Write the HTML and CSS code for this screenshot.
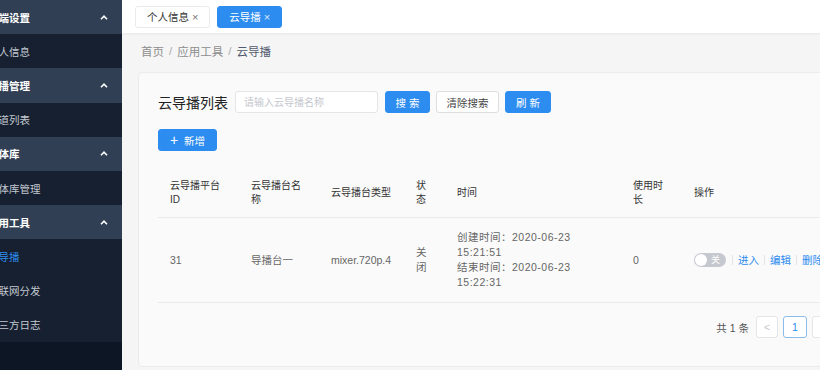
FILE: index.html
```html
<!DOCTYPE html>
<html lang="zh-CN">
<head>
<meta charset="utf-8">
<title>云导播</title>
<link rel="stylesheet" href="styles.css">
</head>
<body>
<div class="app">
  <aside class="sidebar">
    <div class="menu-title"><span class="label">终端设置</span><svg class="arrow" viewBox="0 0 8 5" width="8" height="5"><path d="M1 4.2 L4 1.2 L7 4.2" fill="none" stroke="#fff" stroke-width="1.6"/></svg></div>
    <div class="menu-item"><span class="label">个人信息</span></div>
    <div class="menu-title"><span class="label">直播管理</span><svg class="arrow" viewBox="0 0 8 5" width="8" height="5"><path d="M1 4.2 L4 1.2 L7 4.2" fill="none" stroke="#fff" stroke-width="1.6"/></svg></div>
    <div class="menu-item"><span class="label">频道列表</span></div>
    <div class="menu-title"><span class="label">媒体库</span><svg class="arrow" viewBox="0 0 8 5" width="8" height="5"><path d="M1 4.2 L4 1.2 L7 4.2" fill="none" stroke="#fff" stroke-width="1.6"/></svg></div>
    <div class="menu-item"><span class="label">媒体库管理</span></div>
    <div class="menu-title"><span class="label">应用工具</span><svg class="arrow" viewBox="0 0 8 5" width="8" height="5"><path d="M1 4.2 L4 1.2 L7 4.2" fill="none" stroke="#fff" stroke-width="1.6"/></svg></div>
    <div class="menu-item active"><span class="label">云导播</span></div>
    <div class="menu-item"><span class="label">互联网分发</span></div>
    <div class="menu-item"><span class="label">第三方日志</span></div>
  </aside>
  <main class="main">
    <div class="tabs">
      <span class="tab">个人信息 <span class="close">×</span></span>
      <span class="tab tab-active">云导播 <span class="close">×</span></span>
    </div>
    <div class="crumb">
      <span>首页</span><span class="sep">/</span><span>应用工具</span><span class="sep">/</span><span class="crumb-last">云导播</span>
    </div>
    <section class="card">
      <div class="toolbar">
        <h2 class="card-title">云导播列表</h2>
        <input class="search" type="text" placeholder="请输入云导播名称">
        <button class="btn btn-primary btn-search">搜 索</button>
        <button class="btn btn-default btn-clear">清除搜索</button>
        <button class="btn btn-primary btn-refresh">刷 新</button>
      </div>
      <div class="toolbar-2">
        <button class="btn btn-primary btn-add"><span class="plus">+</span>新增</button>
      </div>
      <table class="table">
        <colgroup>
          <col class="c1"><col class="c2"><col class="c3"><col class="c4"><col class="c5"><col class="c6"><col class="c7">
        </colgroup>
        <thead>
          <tr>
            <th>云导播平台ID</th>
            <th>云导播台名称</th>
            <th>云导播台类型</th>
            <th>状态</th>
            <th>时间</th>
            <th>使用时长</th>
            <th>操作</th>
          </tr>
        </thead>
        <tbody>
          <tr>
            <td>31</td>
            <td>导播台一</td>
            <td>mixer.720p.4</td>
            <td>关闭</td>
            <td class="time">创建时间：2020-06-23 15:21:51<br>结束时间：2020-06-23 15:22:31</td>
            <td>0</td>
            <td>
              <div class="ops">
                <span class="switch"><span class="knob"></span><span class="switch-text">关</span></span>
                <span class="divider"></span>
                <a class="link">进入</a>
                <span class="divider"></span>
                <a class="link">编辑</a>
                <span class="divider"></span>
                <a class="link">删除</a>
              </div>
            </td>
          </tr>
        </tbody>
      </table>
      <div class="pager">
        <span class="total">共 1 条</span>
        <span class="page page-prev">&lt;</span>
        <span class="page page-current">1</span>
        <span class="page page-next">&gt;</span>
      </div>
    </section>
  </main>
</div>
</body>
</html>
```
FILE: styles.css
```css
* { box-sizing: border-box; }
html, body {
  margin: 0;
  padding: 0;
  width: 820px;
  height: 370px;
  overflow: hidden;
  font-family: "Liberation Sans", "Noto Sans CJK SC", sans-serif;
  background: #f5f5f5;
}
.app {
  display: flex;
  width: 820px;
  height: 370px;
  overflow: hidden;
}
.sidebar {
  width: 122px;
  flex-shrink: 0;
  background: #0d1625;
  overflow: hidden;
  display: flex;
  flex-direction: column;
}
.menu-title, .menu-item {
  height: 34.2px;
  display: flex;
  align-items: center;
  font-size: 10.5px;
  white-space: nowrap;
  flex-shrink: 0;
}
.menu-title {
  background: #313f54;
  color: #fff;
  font-weight: bold;
  justify-content: space-between;
  padding-right: 14px;
}
.menu-item {
  background: #162030;
  color: #c3c8d0;
}
.menu-item.active { color: #2d8cf0; }
.label { margin-left: -12px; }
.arrow { display: block; }

.main {
  flex: 1;
  min-width: 0;
  background: #f5f5f5;
  overflow: hidden;
}
.tabs {
  height: 33px;
  background: #fff;
  box-shadow: 0 1px 3px rgba(0,0,0,0.06);
  display: flex;
  align-items: center;
  gap: 7px;
  padding-left: 13px;
  position: relative;
}
.tab {
  height: 22px;
  display: inline-flex;
  align-items: center;
  padding: 0 11px;
  font-size: 10.5px;
  color: #333;
  background: #fff;
  border: 1px solid #e8eaec;
  border-radius: 3px;
  white-space: pre;
}
.tab .close { font-size: 11px; color: #777; }
.tab-active {
  background: #2d8cf0;
  border-color: #2d8cf0;
  color: #fff;
}
.tab-active .close { color: #dbeafd; }

.crumb {
  height: 39px;
  display: flex;
  align-items: center;
  padding-left: 19px;
  padding-bottom: 4px;
  font-size: 11.5px;
  color: #8d8d8d;
}
.crumb .sep { margin: 0 5px; color: #aaa; }
.crumb-last { color: #515a6e; }

.card {
  margin-left: 16px;
  width: 716px;
  height: 295px;
  background: #fafafa;
  border: 1px solid #ececec;
  border-radius: 4px;
  padding: 18px 19px;
}
.toolbar {
  display: flex;
  align-items: center;
  height: 22px;
}
.card-title {
  margin: 0 7px 0 0;
  font-size: 14px;
  font-weight: normal;
  color: #222;
  white-space: nowrap;
}
.search {
  width: 143px;
  height: 22px;
  border: 1px solid #e3e5e8;
  border-radius: 3px;
  background: #fff;
  padding: 0 8px;
  font-size: 10px;
  font-family: inherit;
  margin-right: 7px;
  outline: none;
}
.search::placeholder { color: #c5c8ce; }
.btn {
  height: 22px;
  padding: 0;
  font-size: 10.5px;
  font-family: inherit;
  border-radius: 3px;
  border: 1px solid #dcdee2;
  margin-right: 6px;
  white-space: pre;
  display: inline-flex;
  align-items: center;
  justify-content: center;
  cursor: pointer;
}
.btn-primary {
  background: #2d8cf0;
  border-color: #2d8cf0;
  color: #fff;
}
.btn-default { background: #fff; color: #444; }
.btn-search { width: 45px; }
.btn-clear { width: 63px; }
.btn-refresh { width: 46px; }
.toolbar-2 { margin-top: 16px; height: 22px; display: flex; }
.btn-add { width: 59px; }
.plus { font-size: 14px; margin-right: 6px; line-height: 1; }

.table {
  margin-top: 18px;
  width: 678px;
  border-collapse: collapse;
  table-layout: fixed;
  font-size: 10.5px;
}
.c1 { width: 81px; }
.c2 { width: 80px; }
.c3 { width: 85px; }
.c4 { width: 41px; }
.c5 { width: 176px; }
.c6 { width: 61px; }
.c7 { width: 154px; }
.table th {
  text-align: left;
  font-weight: normal;
  font-size: 10px;
  color: #333;
  padding: 10px 12px;
  line-height: 14px;
  border-bottom: 1px solid #e8eaec;
  vertical-align: middle;
}
.table td {
  color: #666;
  padding: 12px 12px;
  line-height: 15px;
  border-bottom: 1px solid #e8eaec;
  vertical-align: middle;
}
.table td.time { letter-spacing: 0.5px; }
.ops {
  display: flex;
  align-items: center;
  gap: 5px;
  white-space: nowrap;
}
.switch {
  display: inline-flex;
  align-items: center;
  width: 32px;
  height: 14px;
  border-radius: 7px;
  background: #c5c8ce;
  padding: 0 1px;
  margin-right: 1px;
}
.knob {
  width: 12px;
  height: 12px;
  border-radius: 50%;
  background: #fff;
}
.switch-text {
  color: #fff;
  font-size: 9px;
  margin-left: 4px;
}
.divider {
  display: inline-block;
  width: 1px;
  height: 10px;
  background: #e3e5e8;
}
.link { color: #2d8cf0; cursor: pointer; }

.pager {
  margin-top: 13px;
  display: flex;
  justify-content: flex-end;
  align-items: center;
  gap: 5px;
  font-size: 10.5px;
}
.total { color: #555; margin-right: 2px; }
.page {
  width: 22px;
  height: 22px;
  display: inline-flex;
  align-items: center;
  justify-content: center;
  border: 1px solid #e3e5e8;
  border-radius: 3px;
  background: #fff;
  color: #c5c8ce;
}
.page-current {
  width: 24px;
  border-color: #8cbbe9;
  color: #2d8cf0;
}
```
